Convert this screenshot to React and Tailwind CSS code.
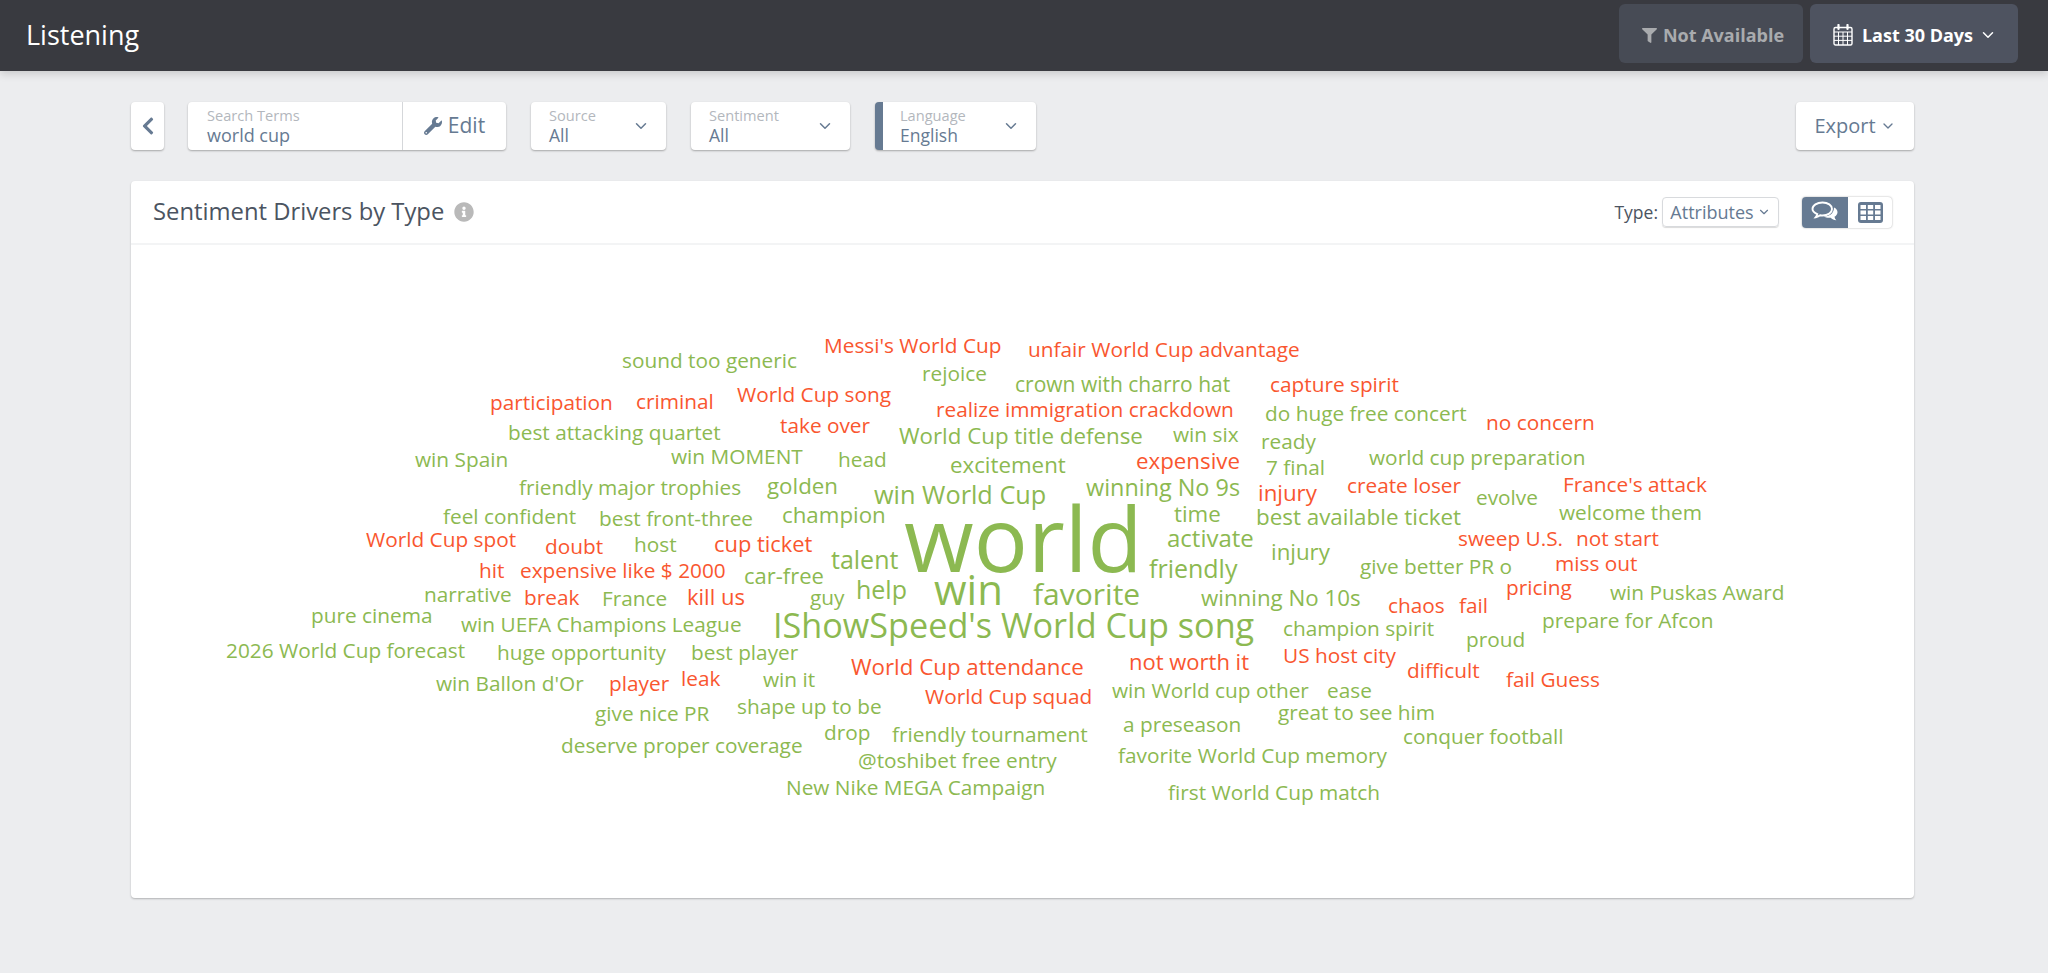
import { FaChevronLeft, FaFilter, FaInfoCircle, FaWrench } from "react-icons/fa";
import { LuChevronDown } from "react-icons/lu";

const G = "#8cb951";
const R = "#f9562f";

// text, x, baseline, size, colour
const words = [
  ["world", 904, 571, 90, G],
  ["win", 934, 604, 42, G],
  ["IShowSpeed's World Cup song", 773, 637, 34.2, G],
  ["favorite", 1033, 604, 30, G],
  ["friendly", 1149, 577, 25, G],
  ["talent", 831, 568, 25, G],
  ["help", 856, 598, 25, G],
  ["win World Cup", 874, 503, 25.3, G],
  ["activate", 1167, 546, 24, G],
  ["sound too generic", 622, 367, 20.8, G],
  ["Messi's World Cup", 824, 352, 20.8, R],
  ["unfair World Cup advantage", 1028, 356, 20.8, R],
  ["rejoice", 922, 380, 20.8, G],
  ["participation", 490, 409, 20.8, R],
  ["criminal", 636, 408, 20.8, R],
  ["World Cup song", 737, 401, 20.8, R],
  ["crown with charro hat", 1015, 391, 21, G],
  ["capture spirit", 1270, 391, 20.8, R],
  ["realize immigration crackdown", 936, 416, 20.8, R],
  ["do huge free concert", 1265, 420, 20.8, G],
  ["no concern", 1486, 429, 20.8, R],
  ["best attacking quartet", 508, 439, 20.8, G],
  ["take over", 780, 432, 20.8, R],
  ["World Cup title defense", 899, 443, 22.3, G],
  ["win six", 1173, 441, 20.8, G],
  ["ready", 1261, 448, 20.8, G],
  ["win Spain", 415, 466, 20.8, G],
  ["win MOMENT", 671, 463, 20.8, G],
  ["head", 838, 466, 20.8, G],
  ["excitement", 950, 472, 22.3, G],
  ["expensive", 1136, 468, 22.3, R],
  ["7 final", 1266, 474, 20.8, G],
  ["world cup preparation", 1369, 464, 20.8, G],
  ["friendly major trophies", 519, 494, 20.8, G],
  ["golden", 767, 493, 22.3, G],
  ["winning No 9s", 1086, 495, 23.4, G],
  ["injury", 1258, 500, 22.3, R],
  ["create loser", 1347, 492, 20.8, R],
  ["evolve", 1476, 504, 20.8, G],
  ["France's attack", 1563, 491, 20.8, R],
  ["feel confident", 443, 523, 20.8, G],
  ["best front-three", 599, 525, 20.8, G],
  ["champion", 782, 522, 22.3, G],
  ["time", 1174, 521, 22.3, G],
  ["best available ticket", 1256, 524, 22.4, G],
  ["welcome them", 1559, 519, 20.8, G],
  ["World Cup spot", 366, 546, 20.8, R],
  ["doubt", 545, 553, 20.8, R],
  ["host", 634, 551, 20.8, G],
  ["cup ticket", 714, 551, 21.9, R],
  ["sweep U.S.", 1458, 545, 20.8, R],
  ["not start", 1576, 545, 20.8, R],
  ["injury", 1271, 559, 22.3, G],
  ["give better PR o", 1360, 573, 20.8, G],
  ["miss out", 1555, 570, 20.8, R],
  ["hit", 479, 577, 20.8, R],
  ["expensive like $ 2000", 520, 577, 20.8, R],
  ["car-free", 744, 583, 22, G],
  ["narrative", 424, 601, 20.8, G],
  ["break", 524, 604, 20.8, R],
  ["France", 602, 605, 20.8, G],
  ["kill us", 687, 604, 22, R],
  ["guy", 810, 604, 20.8, G],
  ["winning No 10s", 1201, 605, 22.3, G],
  ["pricing", 1506, 594, 20.8, R],
  ["chaos", 1388, 612, 20.8, R],
  ["fail", 1459, 612, 20.8, R],
  ["win Puskas Award", 1610, 599, 20.8, G],
  ["pure cinema", 311, 622, 20.8, G],
  ["win UEFA Champions League", 461, 631, 20.8, G],
  ["champion spirit", 1283, 635, 20.8, G],
  ["prepare for Afcon", 1542, 627, 20.8, G],
  ["proud", 1466, 646, 20.8, G],
  ["2026 World Cup forecast", 226, 657, 20.8, G],
  ["huge opportunity", 497, 659, 20.8, G],
  ["best player", 691, 659, 20.8, G],
  ["US host city", 1283, 662, 20.8, R],
  ["not worth it", 1129, 669, 22, R],
  ["World Cup attendance", 851, 674, 22.3, R],
  ["difficult", 1407, 677, 20.8, R],
  ["fail Guess", 1506, 686, 20.8, R],
  ["win Ballon d'Or", 436, 690, 20.8, G],
  ["player", 609, 690, 20.8, R],
  ["leak", 681, 685, 20.8, R],
  ["win it", 763, 686, 20.8, G],
  ["World Cup squad", 925, 703, 20.8, R],
  ["win World cup other", 1112, 697, 20.8, G],
  ["ease", 1327, 697, 20.8, G],
  ["give nice PR", 595, 720, 20.8, G],
  ["shape up to be", 737, 713, 20.8, G],
  ["great to see him", 1278, 719, 20.8, G],
  ["a preseason", 1123, 731, 20.8, G],
  ["drop", 824, 739, 20.8, G],
  ["friendly tournament", 892, 741, 20.8, G],
  ["conquer football", 1403, 743, 20.8, G],
  ["deserve proper coverage", 561, 752, 20.8, G],
  ["favorite World Cup memory", 1118, 762, 20.8, G],
  ["@toshibet free entry", 858, 767, 20.8, G],
  ["New Nike MEGA Campaign", 786, 794, 20.8, G],
  ["first World Cup match", 1168, 799, 20.8, G],
];

function CalendarIcon() {
  return (
    <svg width="20" height="22" viewBox="0 0 20 22" fill="none" stroke="currentColor">
      <rect x="1" y="3.5" width="18" height="17.5" rx="1.5" strokeWidth="1.4" />
      <path d="M1 8h18M1 12.2h18M1 16.4h18M5.5 8v13M10 8v13M14.500 8v13" strokeWidth="1" />
      <path d="M5.500 1v4M14.500 1v4" strokeWidth="2.200" strokeLinecap="round" />
    </svg>
  );
}

function CommentsIcon() {
  return (
    <svg width="28" height="23" viewBox="0 0 28 23" fill="none">
      <path
        d="M11.500 1.500c5.500 0 9.500 2.800 9.500 6.500s-4 6.500-9.500 6.500c-.8 0-1.600-.1-2.300-.2-1.300 1-2.700 1.600-4.400 1.900.8-1 1.300-2 1.500-3.100C3.500 11.900 1.500 10.100 1.500 8c0-3.700 4.500-6.500 10-6.500z"
        stroke="white"
        strokeWidth="1.900"
      />
      <path
        d="M23 6.500c2.200 1 3.500 2.700 3.500 4.700 0 1.900-1.200 3.500-3 4.500.2 1.300.8 2.500 1.800 3.600-2.300-.4-4.200-1.300-5.600-2.600-2.300.3-5 0-7-1.200 5 .1 10.300-2.500 10.300-9z"
        fill="white"
      />
    </svg>
  );
}

function TableIcon() {
  return (
    <svg width="25" height="21" viewBox="0 0 25 21">
      <rect width="25" height="21" rx="3" fill="#667a92" />
      <path
        d="M2.500 3h5.500v4h-5.500zM9.800 3h5.400v4h-5.400zM17 3h5.500v4h-5.500zM2.500 8.500h5.500v4h-5.500zM9.800 8.500h5.400v4h-5.400zM17 8.500h5.500v4h-5.500zM2.500 14h5.500v4h-5.500zM9.800 14h5.400v4h-5.400zM17 14h5.500v4h-5.500z"
        fill="white"
      />
    </svg>
  );
}

function FilterSelect({ label, value, width, accent }) {
  return (
    <div className={`flex h-12 items-center justify-between rounded bg-white pr-4 shadow-[0_1px_2px_rgba(0,0,0,0.3)] ${width} ${accent ? "border-l-8 border-[#667a92] pl-[17px]" : "pl-[18px]"}`}>
      <div className="flex flex-col">
        <span className="text-[14.6px] leading-[18px] text-[#b3b7bd]">{label}</span>
        <span className="text-[17.5px] leading-[22px] text-[#667a92]">{value}</span>
      </div>
      <LuChevronDown className="text-[18px] text-[#667a92]" />
    </div>
  );
}

export default function App() {
  return (
    <div className="min-h-screen bg-[#ecedef] font-['Open_Sans',sans-serif]">
      <header className="flex h-[71px] items-center justify-between bg-[#393a40] pl-[26px] pr-[30px] shadow-[0_3px_8px_rgba(0,0,0,0.15)]">
        <h1 className="text-[27px] text-white">Listening</h1>
        <div className="mt-1 flex h-[59px] gap-[7px] self-start">
          <div className="flex w-[184px] items-center justify-center gap-[6px] rounded-md bg-[#474b55] pl-[4px] pt-[3px] text-[18px] font-bold text-[#a9abae]">
            <FaFilter className="text-[15px]" />
            Not Available
          </div>
          <div className="flex w-[208px] items-center justify-center gap-[9px] rounded-md bg-[#4e5360] pl-[2px] pt-[3px] text-[18px] font-bold text-white">
            <CalendarIcon />
            <span className="flex items-center gap-[6px]">
              Last 30 Days
              <LuChevronDown className="text-[18px] font-normal" />
            </span>
          </div>
        </div>
      </header>

      <main className="pl-[131px] pr-[134px] pt-[31px]">
        <div className="flex items-center">
          <button className="flex h-12 w-[33px] items-center justify-center rounded bg-white text-[20px] text-[#667a92] shadow-[0_1px_2px_rgba(0,0,0,0.3)]">
            <FaChevronLeft />
          </button>
          <div className="ml-6 flex h-12 w-[318px] rounded bg-white shadow-[0_1px_2px_rgba(0,0,0,0.3)]">
            <div className="flex w-[215px] flex-col justify-center border-r border-[#d5d7da] pl-[19px]">
              <span className="text-[14.6px] leading-[18px] text-[#b3b7bd]">Search Terms</span>
              <span className="text-[18px] leading-[22px] text-[#667a92]">world cup</span>
            </div>
            <div className="flex flex-1 items-center justify-center gap-[6px] text-[21px] text-[#667a92]">
              <FaWrench className="text-[18px]" />
              Edit
            </div>
          </div>
          <div className="ml-[25px]">
            <FilterSelect label="Source" value="All" width="w-[135px]" />
          </div>
          <div className="ml-[25px]">
            <FilterSelect label="Sentiment" value="All" width="w-[159px]" />
          </div>
          <div className="ml-[25px]">
            <FilterSelect label="Language" value="English" width="w-[161px]" accent />
          </div>
          <button className="ml-auto flex h-12 w-[118px] items-center justify-center gap-1 rounded bg-white text-[20px] text-[#667a92] shadow-[0_1px_2px_rgba(0,0,0,0.3)]">
            Export
            <LuChevronDown className="text-[16px]" />
          </button>
        </div>

        <section className="mt-[31px] rounded bg-white shadow-[0_1px_2px_rgba(0,0,0,0.25)]">
          <div className="flex h-16 items-center justify-between border-b-2 border-[#f3f4f5] pl-[22px] pr-[22px]">
            <div className="flex items-center gap-[10px]">
              <h2 className="text-[23.800px] text-[#4b5461]">Sentiment Drivers by Type</h2>
              <FaInfoCircle className="text-[20px] text-[#b9b9b9]" />
            </div>
            <div className="flex items-center">
              <span className="text-[17.5px] text-[#4b5461]">Type:</span>
              <button className="ml-1 flex h-[30px] w-[117px] items-center justify-center gap-[3px] rounded border border-[#d8dadd] text-[18px] text-[#667a92] shadow-[0_1px_1px_rgba(0,0,0,0.15)]">
                Attributes
                <LuChevronDown className="text-[14px]" />
              </button>
              <div className="ml-[23px] flex h-[31px] w-[90px] rounded bg-white shadow-[0_0_2px_rgba(0,0,0,0.35)]">
                <div className="flex w-[46px] items-center justify-center rounded-l bg-[#667a92]">
                  <CommentsIcon />
                </div>
                <div className="flex flex-1 items-center justify-center">
                  <TableIcon />
                </div>
              </div>
            </div>
          </div>
          <svg className="block w-full" height="653" viewBox="131 244 1783 653">
            {words.map(([text, x, y, size, fill]) => (
              <text key={text + fill} x={x} y={y} fontSize={size} fill={fill}>
                {text}
              </text>
            ))}
          </svg>
        </section>
      </main>
    </div>
  );
}
